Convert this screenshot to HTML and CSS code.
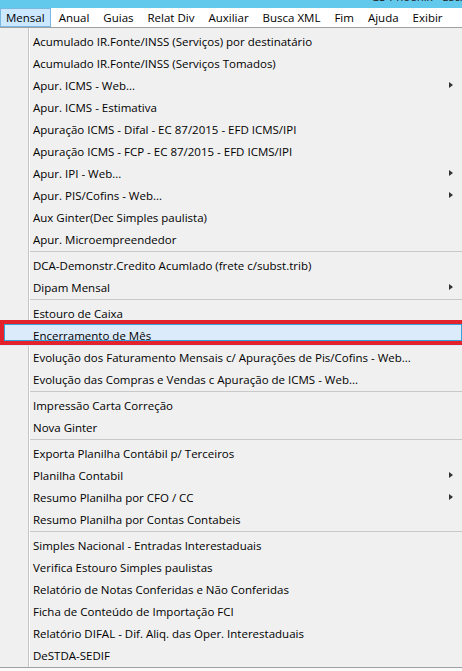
FILE: index.html
```html
<!DOCTYPE html>
<html lang="pt-BR">
<head>
    <meta charset="UTF-8">
    <meta name="viewport" content="width=device-width, initial-scale=1.0">
    <title>GS-Phoenix - Mensal</title>
    <link rel="stylesheet" href="styles.css">
</head>
<body>
    <div class="titlebar">
        <span class="title">GS-Phoenix - Escrita Fiscal</span>
    </div>

    <nav class="menubar">
        <span class="menubar-item open">Mensal</span>
        <span class="menubar-item">Anual</span>
        <span class="menubar-item">Guias</span>
        <span class="menubar-item">Relat Div</span>
        <span class="menubar-item">Auxiliar</span>
        <span class="menubar-item">Busca XML</span>
        <span class="menubar-item">Fim</span>
        <span class="menubar-item">Ajuda</span>
        <span class="menubar-item">Exibir</span>
    </nav>

    <div class="dropdown">
        <ul class="menu-list">
            <li class="item">Acumulado IR.Fonte/INSS (Serviços) por destinatário</li>
            <li class="item">Acumulado IR.Fonte/INSS (Serviços Tomados)</li>
            <li class="item has-sub">Apur. ICMS - Web...<span class="arrow"></span></li>
            <li class="item">Apur. ICMS - Estimativa</li>
            <li class="item">Apuração ICMS - Difal - EC 87/2015 - EFD ICMS/IPI</li>
            <li class="item">Apuração ICMS - FCP - EC 87/2015 - EFD ICMS/IPI</li>
            <li class="item has-sub">Apur. IPI - Web...<span class="arrow"></span></li>
            <li class="item has-sub">Apur. PIS/Cofins - Web...<span class="arrow"></span></li>
            <li class="item">Aux Ginter(Dec Simples paulista)</li>
            <li class="item">Apur. Microempreendedor</li>
            <li class="separator"></li>
            <li class="item">DCA-Demonstr.Credito Acumlado (frete c/subst.trib)</li>
            <li class="item has-sub">Dipam Mensal<span class="arrow"></span></li>
            <li class="separator"></li>
            <li class="item">Estouro de Caixa</li>
            <li class="item hot">Encerramento de Mês<span class="mark"></span></li>
            <li class="item">Evolução dos Faturamento Mensais c/ Apurações de Pis/Cofins - Web...</li>
            <li class="item">Evolução das Compras e Vendas c Apuração de ICMS - Web...</li>
            <li class="separator"></li>
            <li class="item">Impressão Carta Correção</li>
            <li class="item">Nova Ginter</li>
            <li class="separator"></li>
            <li class="item">Exporta Planilha Contábil p/ Terceiros</li>
            <li class="item has-sub">Planilha Contabil<span class="arrow"></span></li>
            <li class="item has-sub">Resumo Planilha por CFO / CC<span class="arrow"></span></li>
            <li class="item">Resumo Planilha por Contas Contabeis</li>
            <li class="separator"></li>
            <li class="item">Simples Nacional - Entradas Interestaduais</li>
            <li class="item">Verifica Estouro Simples paulistas</li>
            <li class="item">Relatório de Notas Conferidas e Não Conferidas</li>
            <li class="item">Ficha de Conteúdo de Importação FCI</li>
            <li class="item">Relatório DIFAL - Dif. Aliq. das Oper. Interestaduais</li>
            <li class="item">DeSTDA-SEDIF</li>
        </ul>
    </div>
</body>
</html>
```

FILE: styles.css
```css
/* Janela e menu suspenso no estilo Windows */
body {
    font-family: "Open Sans", "Noto Sans", sans-serif;
    font-size: 11.5px;
    color: #000;
    background-color: #fafafa;
    margin: 0;
    width: 462px;
    height: 671px;
    overflow: hidden;
}

.titlebar {
    background-color: #63c9ec;
    height: 8px;
    overflow: hidden;
}

.title {
    display: block;
    margin: -9px 0 0 371px;
    line-height: 12px;
    color: #1a1a1a;
    white-space: nowrap;
}

/* Barra de menus */
.menubar {
    display: flex;
    gap: 2px;
    background-color: #fff;
    height: 19px;
}

.menubar-item {
    padding: 0 5px;
    line-height: 17px;
    border: 1px solid transparent;
    white-space: nowrap;
}

.menubar-item.open {
    background-color: #cce8ff;
    border-color: #7ab8e4;
}

/* Menu suspenso */
.dropdown {
    width: 466px;
    background-color: #f0f0f0;
    background-image: linear-gradient(to right,
        transparent 28px, #c5c5c5 28px, #c5c5c5 29px,
        #fff 29px, #fff 30px, transparent 30px);
    border-top: 1px solid #a0a0a0;
    border-bottom: 1px solid #a0a0a0;
    padding: 2px 0 1px;
}

.menu-list {
    list-style: none;
    margin: 0;
    padding: 0;
}

.item {
    display: flex;
    align-items: center;
    justify-content: space-between;
    height: 22px;
    padding-left: 33px;
    white-space: nowrap;
    position: relative;
}

.arrow {
    width: 0;
    height: 0;
    margin-right: 13px;
    border-left: 4px solid #333;
    border-top: 3.5px solid transparent;
    border-bottom: 3.5px solid transparent;
}

.separator {
    height: 1px;
    margin: 1px 0 2px 30px;
    background-color: #c8c8c8;
}

/* Item em destaque */
.item.hot {
    background-color: #dcebfb;
}

.mark {
    position: absolute;
    top: -4px;
    left: 0;
    right: 0;
    height: 17px;
    border: 4px solid #e3232b;
    box-shadow: inset 0 0 0 1px #35a2dc;
}
```
